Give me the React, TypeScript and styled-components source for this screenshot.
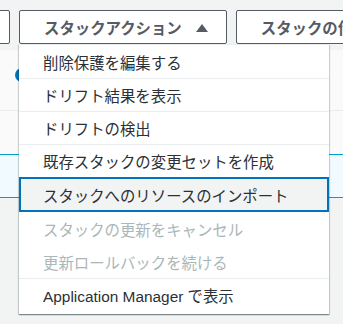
import React from 'react';
import styled, { createGlobalStyle } from 'styled-components';

const GlobalStyle = createGlobalStyle`
  html, body {
    margin: 0;
    padding: 0;
    background: #f2f3f3;
    overflow: hidden;
  }
  body {
    font-family: 'Liberation Sans', 'Noto Sans CJK JP', sans-serif;
    font-size: 15.4px;
    color: #16191f;
  }
`;

interface MenuEntry {
  label: string;
  disabled?: boolean;
  highlighted?: boolean;
  groupStart?: boolean;
}

const entries: MenuEntry[] = [
  { label: '削除保護を編集する' },
  { label: 'ドリフト結果を表示', groupStart: true },
  { label: 'ドリフトの検出', groupStart: true },
  { label: '既存スタックの変更セットを作成', groupStart: true },
  { label: 'スタックへのリソースのインポート', highlighted: true },
  { label: 'スタックの更新をキャンセル', disabled: true },
  { label: '更新ロールバックを続ける', disabled: true },
  { label: 'Application Manager で表示', groupStart: true },
];

function Caret({ up }: { up?: boolean }) {
  return (
    <svg width="12" height="8" viewBox="0 0 12 8">
      <polygon points={up ? '6,0 12,8 0,8' : '0,0 12,0 6,8'} fill="#545b64" />
    </svg>
  );
}

function App() {
  return (
    <Page>
      <GlobalStyle />
      <Toolbar>
        <ToolButton $width={70}>削除</ToolButton>
        <ActionWrap>
          <ToolButton>
            スタックアクション
            <Caret up />
          </ToolButton>
          <Menu>
            {entries.map((entry) => (
              <MenuItem
                key={entry.label}
                $disabled={entry.disabled}
                $highlighted={entry.highlighted}
                $groupStart={entry.groupStart}
              >
                {entry.label}
              </MenuItem>
            ))}
          </Menu>
        </ActionWrap>
        <ToolButton>
          スタックの作成
          <Caret />
        </ToolButton>
      </Toolbar>

      <Table>
        <Row $height={61}>
          <Radio />
        </Row>
        <Row $height={44} />
        <SelectedRow />
      </Table>
    </Page>
  );
}

export default App;

const Page = styled.div`
  width: 343px;
  height: 324px;
  overflow: hidden;
  position: relative;
`;

const Toolbar = styled.div`
  display: flex;
  gap: 9px;
  margin-top: 10px;
  margin-left: -60px;
  position: relative;
  z-index: 2;
`;

const ActionWrap = styled.div`
  position: relative;
`;

const ToolButton = styled.button<{ $width?: number }>`
  flex: none;
  box-sizing: border-box;
  height: 34px;
  ${(p) => (p.$width ? `width: ${p.$width}px;` : '')}
  padding: 0 18px 0 24px;
  display: flex;
  align-items: center;
  gap: 14px;
  background: #ffffff;
  border: 1px solid #545b64;
  border-radius: 2px;
  color: #545b64;
  font-family: 'Liberation Sans', 'Noto Sans CJK JP', sans-serif;
  font-size: 15.4px;
  font-weight: bold;
  white-space: nowrap;
  cursor: pointer;

  svg {
    margin-top: 1px;
  }
`;

const Menu = styled.ul`
  position: absolute;
  top: 100%;
  left: 0;
  width: 310px;
  box-sizing: border-box;
  margin: 0;
  padding: 0 0 3px;
  list-style: none;
  background: #ffffff;
  border-top: 1px solid #eaeded;
  box-shadow: 0 1px 1px 0 rgba(0, 28, 36, 0.3), 1px 1px 1px 0 rgba(0, 28, 36, 0.15),
    -1px 1px 1px 0 rgba(0, 28, 36, 0.15);
`;

const MenuItem = styled.li<{ $disabled?: boolean; $highlighted?: boolean; $groupStart?: boolean }>`
  box-sizing: border-box;
  height: ${(p) => (p.$highlighted ? 35 : 33)}px;
  display: flex;
  align-items: center;
  padding-left: ${(p) => (p.$highlighted ? 22 : 24)}px;
  border-top: ${(p) => (p.$groupStart ? '1px solid #eaeded' : 'none')};
  color: ${(p) => (p.$disabled ? '#aab7b8' : '#2b3036')};
  background: ${(p) => (p.$highlighted ? '#f2f3f3' : '#ffffff')};
  ${(p) => (p.$highlighted ? 'border: 2px solid #0073bb;' : '')}
  white-space: nowrap;
`;

const Table = styled.div`
  margin-top: 6px;
  background: #fafafa;
`;

const Row = styled.div<{ $height: number }>`
  height: ${(p) => p.$height}px;
  box-sizing: border-box;
  padding: 18px 0 0 15px;
  border-bottom: 1px solid #eaeded;
`;

const SelectedRow = styled.div`
  height: 44px;
  box-sizing: border-box;
  margin-top: -1px;
  background: #f1faff;
  border-top: 1px solid #00a1c9;
  border-bottom: 1px solid #00a1c9;
`;

const Radio = styled.div`
  width: 14px;
  height: 14px;
  border-radius: 50%;
  background: #0073bb;
`;
